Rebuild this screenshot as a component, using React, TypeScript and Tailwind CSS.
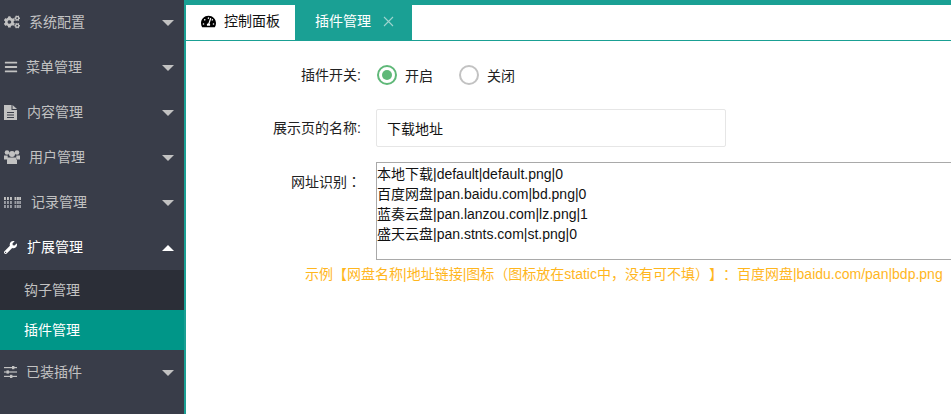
import React from "react";
import { FaCogs, FaBars, FaWrench, FaTachometerAlt } from "react-icons/fa";

const font = "font-['Liberation_Sans','Noto_Sans_CJK_SC',sans-serif] [text-spacing-trim:space-all]";

function GridIcon() {
  return (
    <svg width="17" height="11" viewBox="0 0 17 11" className="shrink-0">
      {[0, 3, 6, 10.5, 13, 15.2].map((x) =>
        [0, 4, 8].map((y) => (
          <rect key={`${x}-${y}`} x={x} y={y} width="1.9" height="3" fill={y === 0 ? "#c2c2c2" : "#9a9ca3"} />
        ))
      )}
    </svg>
  );
}

function FileIcon() {
  return (
    <svg width="13" height="15" viewBox="0 0 13 15" fill="#c2c2c2" fillRule="evenodd" className="shrink-0">
      <path d="M0 0h7.5v5H13v10H0ZM3 7h7v1H3Zm0 2.5h7v1H3ZM3 12h7v1H3Z" />
      <path d="M8.5 0 13 4H8.5Z" />
    </svg>
  );
}

function UsersIcon() {
  return (
    <svg width="16" height="14" viewBox="0 0 16 14" fill="#c2c2c2" className="shrink-0">
      <circle cx="3" cy="2.5" r="2.3" />
      <circle cx="13" cy="2.5" r="2.3" />
      <circle cx="8" cy="4" r="3" />
      <path d="M0 5.5h3.6L4 9.5H0ZM16 5.5h-3.6L12 9.5h4ZM4 7.5h8l1 2.5V14H3v-4Z" />
    </svg>
  );
}

function SlidersIcon() {
  return (
    <svg width="13" height="12" viewBox="0 0 13 12" fill="#c2c2c2" className="shrink-0">
      <rect y="1" width="13" height="1.2" />
      <rect y="5.4" width="13" height="1.2" />
      <rect y="9.8" width="13" height="1.2" />
      <rect x="8" y="0" width="2.4" height="3.2" />
      <rect x="2.5" y="4.4" width="2.4" height="3.2" />
      <rect x="6" y="8.8" width="2.4" height="3.2" />
    </svg>
  );
}

function Caret({ up }: { up?: boolean }) {
  return (
    <span
      className={
        up
          ? "absolute right-[10px] top-1/2 -mt-[3px] w-0 h-0 border-x-[6px] border-x-transparent border-b-[6px] border-b-white"
          : "absolute right-[10px] top-1/2 -mt-[3px] w-0 h-0 border-x-[6px] border-x-transparent border-t-[6px] border-t-[#c2c2c2]"
      }
    />
  );
}

function Item({ icon, label, w, up }: { icon: React.ReactNode; label: string; w: string; up?: boolean }) {
  return (
    <div className={`relative h-[45px] flex items-center pl-1 pb-[1px] text-sm ${up ? "text-white" : "text-[#c2c2c2]"}`}>
      <span className={`flex items-center ${w}`}>{icon}</span>
      <span>{label}</span>
      <Caret up={up} />
    </div>
  );
}

export default function App() {
  return (
    <div className={`${font} w-[951px] h-[414px] overflow-hidden flex bg-white text-sm text-[#222]`}>
      <aside className="w-[184px] shrink-0 bg-[#393d49] flex flex-col">
        <Item icon={<FaCogs size={16} />} w="w-[25px]" label="系统配置" />
        <Item icon={<FaBars size={14} />} w="w-[22px]" label="菜单管理" />
        <Item icon={<FileIcon />} w="w-[23px]" label="内容管理" />
        <Item icon={<UsersIcon />} w="w-[25px]" label="用户管理" />
        <Item icon={<GridIcon />} w="w-[27px]" label="记录管理" />
        <Item icon={<FaWrench size={13} />} w="w-[23px]" label="扩展管理" up />
        <div className="h-[40px] flex items-center pl-6 bg-[#2b2e37] text-[#c2c2c2]">钩子管理</div>
        <div className="h-[40px] flex items-center pl-6 bg-[#009688] text-white">插件管理</div>
        <Item icon={<SlidersIcon />} w="w-[22px]" label="已装插件" />
      </aside>
      <main className="flex-1 min-w-0 flex flex-col border-l-2 border-[#1aa094] border-t-[5px]">
        <nav className="h-[36px] shrink-0 flex border-b border-[#1aa094]">
          <div className="w-[109px] flex items-center justify-center gap-[8px] pb-[3px] text-[#111]">
            <FaTachometerAlt size={15} className="text-black" />
            <span>控制面板</span>
          </div>
          <div className="w-[117px] flex items-center bg-[#1aa094] text-white pl-5 pb-[3px] gap-[12px]">
            <span>插件管理</span>
            <svg width="11" height="11" viewBox="0 0 11 11" stroke="#9ed4cf" strokeWidth="1.1" fill="none">
              <path d="M1 1 10 10M10 1 1 10" />
            </svg>
          </div>
        </nav>
        <form className="flex flex-col pt-[19px]">
          <div className="flex items-center h-[30px]">
            <label className="w-[175px] shrink-0 text-right">插件开关:</label>
            <div className="ml-[16px] flex items-center">
              <span className="w-[20px] h-[20px] rounded-full border-2 border-[#5fb878] flex items-center justify-center">
                <span className="w-[10px] h-[10px] rounded-full bg-[#5fb878]" />
              </span>
              <span className="ml-[8px] pt-[1px]">开启</span>
              <span className="ml-[26px] w-[20px] h-[20px] rounded-full border-2 border-[#c2c2c2]" />
              <span className="ml-[8px] pt-[1px]">关闭</span>
            </div>
          </div>
          <div className="flex items-center mt-[19px]">
            <label className="w-[175px] shrink-0 text-right">展示页的名称:</label>
            <input
              readOnly
              value="下载地址"
              className="ml-[15px] w-[350px] h-[38px] border border-[#e6e6e6] rounded-[2px] px-[10px] pb-[1px] text-sm text-[#111] outline-none"
            />
          </div>
          <div className="flex mt-[15px]">
            <label className="w-[175px] shrink-0 text-right pt-[9px]">
              网址识别<span className="font-['Noto_Sans_CJK_TC']">：</span>
            </label>
            <textarea
              readOnly
              rows={4}
              defaultValue={"本地下载|default|default.png|0\n百度网盘|pan.baidu.com|bd.png|0\n蓝奏云盘|pan.lanzou.com|lz.png|1\n盛天云盘|pan.stnts.com|st.png|0"}
              className="ml-[15px] w-[600px] shrink-0 h-[98px] border border-[#a9a9a9] p-0 pt-[1px] text-sm leading-[20px] text-[#111] resize-none outline-none"
            />
          </div>
          <p className="mt-[4px] ml-[119px] text-[#ffb61e] whitespace-nowrap">
            示例【网盘名称|地址链接|图标（图标放在static中，没有可不填）】：百度网盘|baidu.com/pan|bdp.png
          </p>
        </form>
      </main>
    </div>
  );
}
